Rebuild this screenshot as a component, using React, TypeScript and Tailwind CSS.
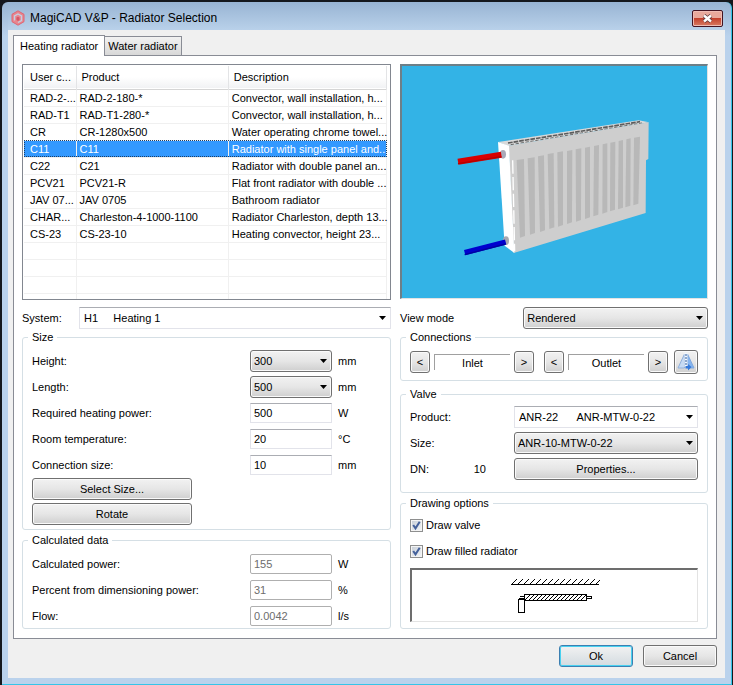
import React, { useState } from "react";

const products = [
  ["RAD-2-...", "RAD-2-180-*", "Convector, wall installation, h..."],
  ["RAD-T1", "RAD-T1-280-*", "Convector, wall installation, h..."],
  ["CR", "CR-1280x500", "Water operating chrome towel..."],
  ["C11", "C11", "Radiator with single panel and..."],
  ["C22", "C21", "Radiator with double panel an..."],
  ["PCV21", "PCV21-R", "Flat front radiator with double ..."],
  ["JAV 07...", "JAV 0705", "Bathroom radiator"],
  ["CHAR...", "Charleston-4-1000-1100", "Radiator Charleston, depth 13..."],
  ["CS-23", "CS-23-10", "Heating convector, height 23..."],
];

// top-left x, top-right x, top y, bottom-left x, bottom y
const slats = [
  [230, 252, 150, 240, 383],
  [263, 284, 145, 270, 374],
  [294, 312, 139, 300, 366],
  [323, 341, 132, 328, 357],
  [352, 369, 127, 354, 350],
  [381, 397, 123, 381, 342],
  [407, 424, 118, 408, 335],
  [435, 450, 113, 435, 327],
  [462, 477, 108, 460, 319],
  [488, 502, 103, 487, 311],
  [511, 526, 98, 510, 304],
  [536, 549, 93, 534, 298],
  [559, 572, 88, 556, 292],
  [582, 600, 83, 580, 286],
];

const face = "border border-[#707070] rounded-[3px] bg-linear-to-b from-[#f2f2f2] via-[#e6e6e6] to-[#cfcfcf] shadow-[inset_0_0_0_1px_#fafafa]";

const Button = ({ children, className = "" }: { children: React.ReactNode; className?: string }) => (
  <button type="button" className={`h-[22px] text-center ${face} ${className}`}>
    {children}
  </button>
);

const Select = ({ id, value, flat, className = "" }: { id: string; value: string; flat?: boolean; className?: string }) => (
  <div className={`relative ${className}`}>
    <select
      id={id}
      className={`block w-full h-[22px] appearance-none pr-5 ${flat ? "pl-1 bg-white border border-[#e2e3ea] border-t-[#abadb3]" : `pl-[3px] ${face}`}`}
    >
      <option>{value}</option>
    </select>
    <svg viewBox="0 0 7 4" className="absolute right-[5px] top-[9px] w-[7px] h-1 pointer-events-none">
      <path d="M0 0h7L3.5 4z" fill="#000" />
    </svg>
  </div>
);

const Group = ({ title, className = "", children }: { title: string; className?: string; children: React.ReactNode }) => (
  <fieldset className={`min-w-0 border border-[#d5dfe5] rounded-[3px] px-[9px] ${className}`}>
    <legend className="-ml-1 px-1 leading-[13px]">{title}</legend>
    {children}
  </fieldset>
);

const Field = ({ id, label, unit, children }: { id: string; label: string; unit: string; children: React.ReactNode }) => (
  <div className="flex items-center h-[22px]">
    <label htmlFor={id} className="flex-1">{label}</label>
    <div className="w-[82px]">{children}</div>
    <span className="w-[43px] ml-1.5">{unit}</span>
  </div>
);

const TextBox = ({ id, value }: { id: string; value: string }) => (
  <input id={id} defaultValue={value} className="block w-full h-5 px-[3px] bg-white border border-[#e2e3ea] border-t-[#abadb3]" />
);

const ResultBox = ({ id, value }: { id: string; value: string }) => (
  <input id={id} value={value} disabled className="block w-full h-5 px-[3px] rounded-[2px] bg-white border border-[#afafaf] text-[#6d6d6d]" />
);

const Check = ({ id, label }: { id: string; label: string }) => {
  const [on, setOn] = useState(true);
  return (
    <div className="flex items-center gap-[3px] h-[22px]">
      <span className="relative w-[13px] h-[13px]">
        <input
          id={id}
          type="checkbox"
          checked={on}
          onChange={() => setOn(!on)}
          className="block w-[13px] h-[13px] appearance-none border border-[#8e8f8f] bg-linear-to-br from-[#c6cdd6] to-[#f4f6f8] shadow-[inset_0_0_0_1px_#f4f4f4]"
        />
        {on && (
          <svg viewBox="0 0 13 13" className="absolute inset-0 pointer-events-none" fill="none" stroke="#44619b" strokeWidth="2">
            <path d="M3.2 6l2.3 3.4L9.7 2.8" />
          </svg>
        )}
      </span>
      <label htmlFor={id}>{label}</label>
    </div>
  );
};

const RadiatorView = () => (
  <div className="h-[235px] border-t-2 border-l-2 border-t-[#6d7f88] border-l-[#6d7f88] border-r border-b border-r-[#e3e3e3] border-b-[#e3e3e3] bg-[#33b3e6]">
    <svg viewBox="-114 -132 915 696" className="block w-full h-full">
      <path d="M174 96L596 31l31 6L205 108z" fill="#d9d9d9" />
      <path d="M204 99L600 35" stroke="#5c5c5c" strokeWidth="5" strokeDasharray="14 3" />
      <path d="M212 104L606 39" stroke="#6a6a6a" strokeWidth="3" strokeDasharray="10 5" />
      <path d="M206 107L626 37l-1 110-7 4-1 158L221 429z" fill="#cecece" />
      <path d="M174 96l33 11 16 322-29-22z" fill="#fff" />
      <path d="M218 151l6 273" stroke="#fff" strokeWidth="4" strokeDasharray="40 10" />
      {slats.map(([l, r, t, b, y]) => (
        <path key={l} d={`M${l} ${t}L${r} ${t - 3}L${b + 15} ${y - 5}L${b} ${y}z`} fill="#b8b8b8" />
      ))}
      <ellipse cx="189" cy="133" rx="9" ry="13" fill="#a9a9b8" />
      <path d="M54 155L184 134" stroke="#d90000" strokeWidth="18" />
      <path d="M54 161L184 140" stroke="#b50000" strokeWidth="4" />
      <ellipse cx="198" cy="392" rx="9" ry="13" fill="#a9a9b0" />
      <path d="M74 428L197 396" stroke="#0000cf" strokeWidth="16" />
      <path d="M74 434L197 402" stroke="#0000a0" strokeWidth="4" />
    </svg>
  </div>
);

const PlanPreview = () => (
  <div className="flex justify-center h-[54px] mt-1.5 border-t-2 border-l-2 border-t-[#6d6d6d] border-l-[#6d6d6d] border-r border-b border-r-[#e3e3e3] border-b-[#e3e3e3]">
    <svg width="90" height="50" viewBox="509 570 90 50" fill="none" stroke="#000" shapeRendering="crispEdges">
      <path d="M510 584.5h88" />
      {Array.from({ length: 15 }, (_, i) => (
        <path key={i} d={`M${511 + i * 6} 584l5 -5`} />
      ))}
      <path d="M523.5 594.5h62v6h-62z" />
      {Array.from({ length: 15 }, (_, i) => (
        <path key={i} d={`M${524 + i * 4} 600l5 -5`} />
      ))}
      <path d="M586 596.5h4.500v2h-4.500M518 598.500h5M519 596.500h4M517.500 599.500h6v13h-6z" />
    </svg>
  </div>
);

const ProductList = () => {
  const [selected, setSelected] = useState(3);
  return (
    <div className="flex flex-col h-[236px] overflow-hidden border border-[#828790] bg-white p-px pr-[3px]">
      <table className="w-full table-fixed border-collapse text-left">
        <colgroup>
          <col className="w-[52px]" />
          <col className="w-[42%]" />
          <col />
        </colgroup>
        <thead>
          <tr className="h-[23px] bg-linear-to-b from-white from-50% to-[#f1f2f4] border-b border-[#d5d5d5]">
            <th className="p-0 pl-1.5 font-normal border-r border-[#e3e4e6] whitespace-nowrap">User c...</th>
            <th className="p-0 pl-[5px] font-normal border-r border-[#e3e4e6]">Product</th>
            <th className="p-0 pl-[5px] font-normal border-r border-[#e3e4e6]">Description</th>
          </tr>
        </thead>
        <tbody>
          {products.map((row, i) => (
            <tr
              key={i}
              onClick={() => setSelected(i)}
              className={`h-[17px] border-b border-[#f0f0f0] ${i === selected ? "bg-[#3399ff] text-white outline-1 outline-dotted -outline-offset-1 outline-[#1c3f66]" : ""}`}
            >
              <td className="p-0 pl-1.5 leading-4 border-r border-[#f0f0f0] whitespace-nowrap">{row[0]}</td>
              <td className="p-0 pl-[3px] leading-4 border-r border-[#f0f0f0] whitespace-nowrap">{row[1]}</td>
              <td className="p-0 pl-[3px] leading-4 border-r border-[#f0f0f0] whitespace-nowrap">{row[2]}</td>
            </tr>
          ))}
          {[0, 1, 2, 3].map((i) => (
            <tr key={i} className="h-[17px] border-b border-[#f0f0f0]">
              <td className="border-r border-[#f0f0f0]" />
              <td className="border-r border-[#f0f0f0]" />
              <td className="border-r border-[#f0f0f0]" />
            </tr>
          ))}
        </tbody>
      </table>
    </div>
  );
};

const Stepper = ({ name, className = "" }: { name: string; className?: string }) => (
  <div className={`flex items-start flex-1 ${className}`}>
    <Button className="w-5 leading-none">&lt;</Button>
    <div className="flex-1 h-4 mx-1 mt-[3px] border-t border-l border-[#a0a0a0] text-center leading-4">{name}</div>
    <Button className="w-5 leading-none">&gt;</Button>
  </div>
);

const TitleBar = () => (
  <div className="flex items-center h-7 pt-1 pl-[3px] bg-linear-to-b from-[#98b4d3] to-[#b9d1ea]">
    <svg viewBox="0 0 14 16" className="w-3.5 h-4" fill="none">
      <path d="M7 .8l6 3.500v7.400l-6 3.500-6-3.500V4.300z" fill="#e8858f" stroke="#dc6774" />
      <path d="M3.500 10.500V6L7 4l3.500 2v4.500L7 12.500" stroke="#c3cfe2" strokeWidth="1.400" />
      <path d="M5.500 7.500L7 6.700l1.500.8v2.600L7 11l-1.500-.9z" fill="#d45765" />
    </svg>
    <h1 className="ml-[5px] text-xs">MagiCAD V&amp;P - Radiator Selection</h1>
    <button
      type="button"
      aria-label="Close"
      className="flex items-center justify-center w-[31px] h-[17px] ml-auto mr-0.5 rounded-[2px] border border-[#431422] bg-linear-to-b from-[#e8a99c] from-45% via-[#c2402c] via-50% to-[#d87a62] shadow-[inset_0_0_0_1px_#eebcb4]"
    >
      <svg viewBox="0 0 11 9" className="w-[11px] h-[9px]" fill="none">
        <path d="M2 1.500l7 6M9 1.500l-7 6" stroke="#5c3a3e" strokeWidth="4" />
        <path d="M2 1.500l7 6M9 1.500l-7 6" stroke="#fff" strokeWidth="2.400" />
      </svg>
    </button>
  </div>
);

const App = () => {
  return (
    <div className="min-h-screen bg-[#15181d] pt-0.5 pl-0.5 pr-px pb-px font-['Liberation_Sans',Arial,sans-serif] text-[11px] leading-[14px] text-black">
      <div className="rounded-t-md overflow-hidden px-1.5 pb-1.5 border-r border-b border-[#35c5e8] bg-linear-to-b from-[#98b4d3] to-[#bad2ec] to-5%">
        <TitleBar />
        <main className="bg-[#f0f0f0] pl-[5px] pr-2 pt-1 pb-[11px]">
          <div role="tablist" className="flex items-end h-[21px]">
            <button type="button" role="tab" aria-selected="true" className="relative z-10 h-[21px] px-1.5 pb-px -mb-px bg-white border border-b-0 border-[#898c95]">
              Heating radiator
            </button>
            <button type="button" role="tab" aria-selected="false" className="h-[19px] px-[3px] border border-l-0 border-b-0 border-[#898c95] bg-linear-to-b from-[#f2f2f2] to-[#d8d8d8]">
              Water radiator
            </button>
          </div>

          <div className="grid grid-cols-[369fr_308fr] gap-[9px] px-2 pt-2 pb-[9px] bg-white border border-[#898c95]">
            <div className="flex flex-col min-w-0">
              <ProductList />
              <div className="flex items-center mt-[7px]">
                <label htmlFor="system" className="w-[57px]">System:</label>
                <Select id="system" flat value={"H1\u00a0\u00a0\u00a0\u00a0\u00a0Heating 1"} className="flex-1" />
              </div>

              <Group title="Size" className="mt-0.5 pb-1">
                <div className="flex flex-col gap-1 pt-1.5">
                  <Field id="height" label="Height:" unit="mm"><Select id="height" value="300" /></Field>
                  <Field id="length" label="Length:" unit="mm"><Select id="length" value="500" /></Field>
                  <Field id="power" label="Required heating power:" unit="W"><TextBox id="power" value="500" /></Field>
                  <Field id="temp" label="Room temperature:" unit="°C"><TextBox id="temp" value="20" /></Field>
                  <Field id="conn" label="Connection size:" unit="mm"><TextBox id="conn" value="10" /></Field>
                </div>
                <div className="flex flex-col items-start gap-[3px] mt-0.5">
                  <Button className="w-40">Select Size...</Button>
                  <Button className="w-40">Rotate</Button>
                </div>
              </Group>

              <Group title="Calculated data" className="mt-1 pb-px">
                <div className="flex flex-col gap-1 pt-1.5">
                  <Field id="calc" label="Calculated power:" unit="W"><ResultBox id="calc" value="155" /></Field>
                  <Field id="percent" label="Percent from dimensioning power:" unit="%"><ResultBox id="percent" value="31" /></Field>
                  <Field id="flow" label="Flow:" unit="l/s"><ResultBox id="flow" value="0.0042" /></Field>
                </div>
              </Group>
            </div>

            <div className="flex flex-col min-w-0">
              <RadiatorView />
              <div className="flex items-center mt-2">
                <label htmlFor="view" className="w-[40%]">View mode</label>
                <Select id="view" value="Rendered" className="flex-1" />
              </div>

              <Group title="Connections" className="mt-0.5 pb-1.5">
                <div className="flex items-center pt-1.5">
                  <Stepper name="Inlet" />
                  <Stepper name="Outlet" className="ml-2.5" />
                  <button type="button" aria-label="Mirror" className={`flex items-center justify-center w-6 h-6 ml-1.5 ${face}`}>
                    <svg viewBox="0 0 18 18" className="w-[18px] h-[18px]" fill="none">
                      <path d="M7.500 1v14H1z" fill="#c6daf3" stroke="#8fb0dc" />
                      <path d="M10.500 1v14H17z" fill="#86b5f0" stroke="#7fa8de" />
                      <path d="M9 0v14" stroke="#f3f8fe" strokeWidth="3" />
                      <path d="M9 1v12" stroke="#6f8fbd" strokeWidth="1.500" strokeDasharray="2 1" />
                      <path d="M8.500 13h2.500v-2l3.500 3-3.500 3.500v-2H8.500z" fill="#3579da" />
                    </svg>
                  </button>
                </div>
              </Group>

              <Group title="Valve" className="mt-[7px] pb-3">
                <div className="grid grid-cols-[104px_1fr] gap-y-1 items-center pt-[5px]">
                  <label htmlFor="product">Product:</label>
                  <Select id="product" flat value={"ANR-22\u00a0\u00a0\u00a0\u00a0\u00a0\u00a0ANR-MTW-0-22"} />
                  <label htmlFor="valve-size">Size:</label>
                  <Select id="valve-size" value="ANR-10-MTW-0-22" />
                  <div className="flex justify-between pr-7"><span>DN:</span><span>10</span></div>
                  <Button>Properties...</Button>
                </div>
              </Group>

              <Group title="Drawing options" className="mt-1 pb-1.5">
                <div className="flex flex-col gap-1 pt-1">
                  <Check id="draw-valve" label="Draw valve" />
                  <Check id="draw-filled" label="Draw filled radiator" />
                </div>
                <PlanPreview />
              </Group>
            </div>
          </div>

          <div className="flex justify-end gap-2.5 mt-1.5">
            <button type="button" className="w-[74px] h-[22px] rounded-[3px] border border-[#3c7fb1] bg-linear-to-b from-[#f2f2f2] to-[#d3dbe0] shadow-[inset_0_0_0_1px_#48d1f0]">Ok</button>
            <Button className="w-[74px]">Cancel</Button>
          </div>
        </main>
      </div>
    </div>
  );
};

export default App;
